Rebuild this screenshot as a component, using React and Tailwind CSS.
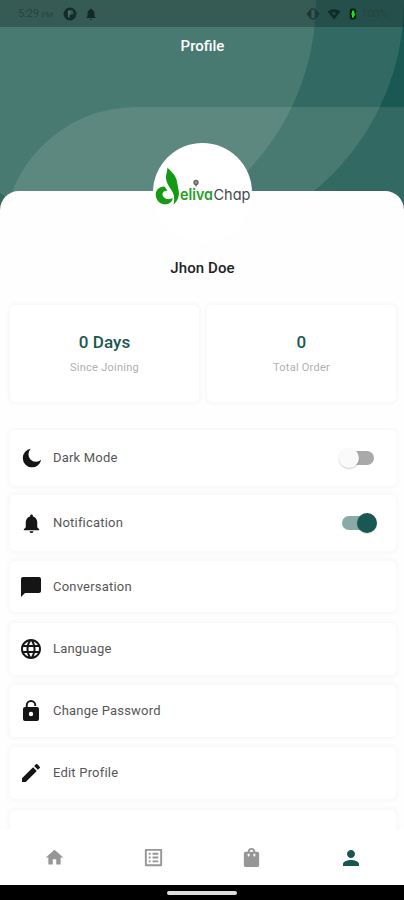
import {
    MdChatBubble,
    MdEdit,
    MdHome,
    MdLanguage,
    MdListAlt,
    MdNotifications,
    MdPerson,
    MdShoppingBag,
} from 'react-icons/md';
import { useState } from 'react';

const MoonIcon = ({ className }) => (
    <svg viewBox="0 0 20 20" className={className} fill="currentColor">
        <path d="M8.8 0.8A9.300 9.300 0 1 0 19.200 11.800 6.600 6.600 0 0 1 8.8 0.8Z" />
    </svg>
);

// padlock with a small gap at the right foot of the shackle
const LockIcon = ({ className }) => (
    <svg viewBox="0 0 24 24" className={className} fill="currentColor">
        <path
            fillRule="evenodd"
            d="M6.800 8V6.200A5.200 5.200 0 0 1 17.200 6.200V6.900H15.300V6.200A3.300 3.300 0 0 0 8.700 6.200V8H18a2 2 0 0 1 2 2V20a2 2 0 0 1-2 2H6a2 2 0 0 1-2-2V10a2 2 0 0 1 2-2ZM12 12.800a2.200 2.200 0 1 0 0 4.400 2.200 2.200 0 0 0 0-4.400Z"
        />
    </svg>
);

const Logo = () => (
    <svg viewBox="0 0 98 46" className="w-[98px] h-[46px]">
        <g fill="#149a14">
            <path d="M13.500 4.500C17 8.500 21 11.500 22.500 16.500C23.500 20.500 24 24.500 24.800 28.500C25.500 33 23.500 38.500 19.500 41.500C20.500 38 20.500 34 19 30C17 25.500 12.500 21 12 15.500C11.700 11.500 13.200 9 13.500 4.500Z" />
            <path d="M10.500 23.500C4.500 23.500 1.200 28 1.800 32.500C2.500 38.500 7 41.800 12 41.300C15.500 40.900 18.500 38.500 18.700 35C15.500 37 10.500 36.500 8.800 32.800C7.800 30 9.500 27.800 13.500 27.500C12.500 26 11.500 24.800 10.500 23.500Z" />
        </g>
        <circle cx="42" cy="19.500" r="2" fill="#999" stroke="#666" strokeWidth="1.400" />
        <path d="M40.800 22 42 24 43.200 22Z" fill="#777" />
        <text x="26" y="37" fontSize="15.500" fontWeight="600" textLength="33" lengthAdjust="spacingAndGlyphs" fill="#25a225" className="font-[Inter,sans-serif] [font-feature-settings:'cv11']">eliva</text>
        <text x="59.500" y="37" fontSize="15" fontWeight="400" textLength="37" lengthAdjust="spacingAndGlyphs" fill="#4a4a4a" className="font-[Inter,sans-serif] [font-feature-settings:'cv11']">Chap</text>
    </svg>
);

const HeaderArt = () => (
    <svg viewBox="0 0 404 210" className="absolute inset-0 w-full h-[210px]">
        <g fill="#eef0dc" fillOpacity="0.12">
            <circle cx="68" cy="0" r="248" />
            <circle cx="156" cy="0" r="248" />
            <path d="M404 107H136A133 133 0 0 0 3 240H404Z" />
        </g>
    </svg>
);

const StatusBar = () => (
    <div className="relative h-[27px] pl-[18px] pr-[15px] flex items-center justify-between bg-black/25 text-[#1b3835]">
        <div className="flex items-center">
            <span className="w-[36px] pt-[2px] text-[11px] whitespace-nowrap text-[#27443f]">
                5:29<span className="text-[8px]"> PM</span>
            </span>
            <svg viewBox="0 0 14 14" className="ml-[9px] size-[14px]">
                <circle cx="7" cy="7" r="6.500" fill="#152d2a" />
                <path d="M5 3.500h4.500v4H6.500v3H5z" fill="#4c6e69" />
                <path d="M7.500 4.500h3v2.500h-3z" fill="#31524d" />
            </svg>
            <MdNotifications className="ml-[7px] size-[14px] text-[#132a27]" />
        </div>
        <div className="flex items-center">
            <svg viewBox="0 0 14 12" className="mr-[3px] w-[14px] h-[12px]" fill="#1b3835">
                <path d="M4 1.500V10.500L0.500 6Z" />
                <path d="M10 1.500V10.500L13.500 6Z" />
                <rect x="4.700" y="1.200" width="4.600" height="9.600" rx="1" fill="none" stroke="#1b3835" strokeWidth="1.200" />
            </svg>
            <svg viewBox="0 0 14 12" className="ml-[4px] w-[14px] h-[12px]">
                <path d="M0.500 3.500Q7-1.500 13.500 3.500L7 11.500Z" fill="#122b28" />
                <path d="M5 4.500h4L7 7.500Z" fill="#2b4b46" />
            </svg>
            <svg viewBox="0 0 8 12" className="ml-[8px] w-[8px] h-[12px]">
                <rect x="0.800" y="0.500" width="6.400" height="11" rx="2.200" fill="#071a0b" />
                <path d="M3.300 2.500h2v3h1.200L4.500 9.800H3V7H2.200Z" fill="#19e31f" />
            </svg>
            <span className="ml-[4px] w-[28px] pt-[2px] text-[11px] whitespace-nowrap text-[#27443f]">100%</span>
        </div>
    </div>
);

const Toggle = ({ on, onClick }) => (
    <button
        onClick={onClick}
        className={`relative w-[33px] h-[14px] rounded-full ${on ? 'bg-[#8aaaa7]' : 'bg-[#a9a9a9]'}`}
    >
        <span
            className={`absolute -top-[3px] size-[20px] rounded-full ${on ? '-right-[2px] bg-[#185752] shadow-[0_1px_1px_rgba(0,0,0,0.15)]' : '-left-[2px] bg-[#fafafa] shadow-[0_1px_2px_rgba(0,0,0,0.2)]'}`}
        />
    </button>
);

const StatCard = ({ value, label }) => (
    <div className="flex-1 h-[97px] rounded-[5px] bg-white shadow-[0_0_4px_1px_#f4f4f4] flex flex-col items-center pt-[26px]">
        <div className="text-[17px] leading-[22px] font-medium tracking-[0.1px] text-[#1c5750]">{value}</div>
        <div className="mt-[7px] text-[11px] leading-[16px] tracking-[0.25px] text-[#b0b0b0]">{label}</div>
    </div>
);

const Row = ({ icon: Icon, label, className, children }) => (
    <div className={`shrink-0 rounded-[5px] bg-white shadow-[0_0_4px_2px_#f7f7f7] flex items-center pl-[11px] ${className}`}>
        <Icon className="size-[21px] shrink-0 text-[#151515]" />
        <span className="ml-[11px] flex-1 text-[13px] tracking-[0.2px] text-[#565656]">{label}</span>
        {children}
    </div>
);

export default function App() {
    const [darkMode, setDarkMode] = useState(false);
    const [notification, setNotification] = useState(true);

    return (
        <div className="w-[404px] h-[900px] overflow-hidden flex flex-col bg-white font-[Roboto,sans-serif]">
            <header className="relative shrink-0 h-[210px] bg-[#195853]">
                <HeaderArt />
                <StatusBar />
                <h1 className="relative mt-[8px] pl-[1px] text-center text-[15px] leading-[22px] font-medium text-white">Profile</h1>
            </header>

            <main className="relative -mt-[19px] h-[639px] shrink-0 rounded-t-[19px] bg-[#fefefe] flex flex-col">
                <div className="-mt-[48px] ml-[153px] size-[99px] shrink-0 rounded-full bg-white flex justify-center pt-[20px]">
                    <Logo />
                </div>
                <h2 className="mt-[15px] pl-[1px] text-center text-[15px] leading-[22px] tracking-[0.1px] font-medium text-[#222]">Jhon Doe</h2>

                <div className="mt-[26px] ml-[10px] mr-[8px] flex gap-[8px]">
                    <StatCard value="0 Days" label="Since Joining" />
                    <StatCard value="0" label="Total Order" />
                </div>

                <div className="mt-[26px] pl-[10px] pr-[8px] pt-[2px] flex-1 min-h-0 overflow-hidden flex flex-col">
                    <Row icon={MoonIcon} label="Dark Mode" className="h-[56px] pr-[22px] [&>svg]:size-[20px] [&>svg]:ml-[1px]">
                        <Toggle on={darkMode} onClick={() => setDarkMode(!darkMode)} />
                    </Row>
                    <Row icon={MdNotifications} label="Notification" className="mt-[9px] h-[56px] pr-[21px] [&>svg]:size-[23px] [&>svg]:-mx-[1px]">
                        <Toggle on={notification} onClick={() => setNotification(!notification)} />
                    </Row>
                    <Row icon={MdChatBubble} label="Conversation" className="mt-[10px] h-[51px] [&>svg]:size-[24px] [&>svg]:-ml-[2px] [&>svg]:mr-[-1px]" />
                    <Row icon={MdLanguage} label="Language" className="mt-[11px] h-[52px] [&>svg]:size-[24px] [&>svg]:-ml-[2px] [&>svg]:mr-[-1px]" />
                    <Row icon={LockIcon} label="Change Password" className="mt-[10px] h-[52px] [&>svg]:size-[24px] [&>svg]:-ml-[2px] [&>svg]:mr-[-1px]" />
                    <Row icon={MdEdit} label="Edit Profile" className="mt-[10px] h-[52px] [&>svg]:size-[24px] [&>svg]:-ml-[2px] [&>svg]:mr-[-1px]" />
                    <div className="mt-[11px] h-[52px] shrink-0 rounded-[5px] bg-white shadow-[0_0_4px_2px_#f7f7f7]" />
                </div>
            </main>

            <nav className="relative h-[55px] shrink-0 pl-[5px] pr-[4px] grid grid-cols-4 items-center justify-items-center bg-white text-[#969696]">
                <MdHome className="size-[21px]" />
                <MdListAlt className="size-[23px]" />
                <MdShoppingBag className="size-[23px]" />
                <MdPerson className="size-[24px] text-[#185750]" />
            </nav>
            <div className="h-[15px] shrink-0 bg-black flex justify-center pt-[6px]">
                <div className="w-[70px] h-[4px] rounded-full bg-[#dedede]" />
            </div>
        </div>
    );
}
